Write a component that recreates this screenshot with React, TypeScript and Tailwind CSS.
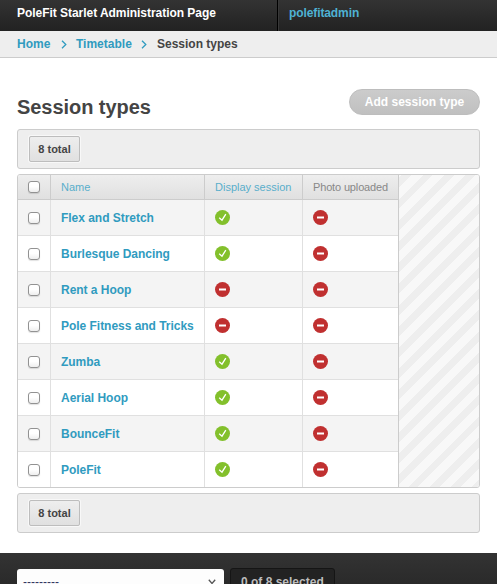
const font = "font-['Liberation_Sans',Arial,sans-serif]";

const rows: [string, boolean][] = [
  ['Flex and Stretch', true],
  ['Burlesque Dancing', true],
  ['Rent a Hoop', false],
  ['Pole Fitness and Tricks', false],
  ['Zumba', true],
  ['Aerial Hoop', true],
  ['BounceFit', true],
  ['PoleFit', true],
];

const widths = ['w-[33px]', 'w-[154px]', 'w-[98px]', 'w-[95px]'];

function Checkbox() {
  return (
    <span className="block size-3 rounded-[3px] border border-[#929292] bg-linear-to-b from-white from-45% to-[#eeeeee] shadow-[0_1px_1px_rgba(0,0,0,0.12)]" />
  );
}

function Status({ on }: { on: boolean }) {
  return (
    <svg width="15" height="15" viewBox="0 0 15 15" fill="none">
      <circle cx="7.5" cy="7.5" r="7.5" fill={on ? '#83c02c' : '#c03030'} />
      {on ? (
        <path d="M4.2 7.8 L7 10.2 L10.8 4.2" stroke="#fff" strokeWidth="1.3" />
      ) : (
        <path d="M4 7.5 H11" stroke="#fff" strokeWidth="2" />
      )}
    </svg>
  );
}

function Chevron() {
  return (
    <svg width="6" height="9" viewBox="0 0 6 9" fill="none" className="shrink-0">
      <path d="M1 0.8 L4.8 4.5 L1 8.2" stroke="#309bbf" strokeWidth="1.3" />
    </svg>
  );
}

function Total() {
  return (
    <section className="flex h-10 shrink-0 items-center rounded-[3px] border border-[#cccccc] bg-[#eeeeee] pl-[11px]">
      <span className="flex h-[26px] w-[51px] items-center justify-center rounded-[2px] border border-[#bdbdbd] bg-linear-to-b from-[#eeeeee] to-[#e0e0e0] text-[11px] font-bold text-[#444444] shadow-[0_0_0_1px_#f8f8f8]">
        8 total
      </span>
    </section>
  );
}

export default function App() {
  return (
    <div className={`flex h-[584px] w-[497px] flex-col overflow-hidden bg-white text-xs ${font}`}>
      <header className="flex h-[31px] shrink-0 bg-linear-to-b from-[#333333] to-[#222222] font-bold leading-[26px]">
        <div className="w-[278px] whitespace-nowrap border-r border-black pl-[17px] tracking-[-0.04px] text-white">
          PoleFit Starlet Administration Page
        </div>
        <div className="grow border-l border-[#383838] pl-2.5 tracking-[-0.1px] text-[#4fb2d3]">polefitadmin</div>
      </header>
      <nav className="flex h-[27px] shrink-0 items-center border-b border-[#cccccc] bg-[#eeeeee] pl-[17px] font-bold text-[#309bbf]">
        <span className="w-11">Home</span>
        <Chevron />
        <span className="ml-[9px] w-[65px]">Timetable</span>
        <Chevron />
        <span className="ml-[10px] text-[#444444]">Session types</span>
      </nav>
      <main className="flex h-[495px] shrink-0 flex-col px-[17px]">
        <div className="flex h-[71px] shrink-0 items-start justify-between">
          <h1 className="mt-[37px] text-xl font-bold leading-6 tracking-[-0.05px] text-[#444444]">Session types</h1>
          <button className="mt-[31px] h-[26px] w-[131px] rounded-full border border-[#bdbdbd] bg-linear-to-b from-[#cccccc] to-[#c0c0c0] text-xs font-bold leading-6 text-white">
            Add session type
          </button>
        </div>
        <Total />
        <div className="my-[5px] flex h-[314px] shrink-0 overflow-hidden rounded-[3px] border border-[#cccccc]">
          <div className="w-[381px] shrink-0 border-r border-[#cccccc]">
            <div className="flex h-[25px] border-b border-[#cccccc] bg-linear-to-b from-[#eeeeee] to-[#e0e0e0] text-[11px] text-[#888888]">
              <div className="flex w-[33px] items-center border-r border-[#cccccc] pl-2.5">
                <Checkbox />
              </div>
              <div className="flex w-[154px] items-center border-r border-[#cccccc] pl-2.5 text-[#59aecb]">Name</div>
              <div className="flex w-[98px] items-center whitespace-nowrap border-r border-[#cccccc] pl-2.5 text-[#59aecb]">
                Display session
              </div>
              <div className="flex w-[95px] items-center whitespace-nowrap pl-2.5 tracking-[-0.15px]">
                Photo uploaded
              </div>
            </div>
            {rows.map(([name, on], i) => (
              <div
                key={name}
                className={`flex h-9 border-[#e0e0e0] ${i < 7 ? 'border-b' : ''} ${i % 2 ? 'bg-white' : 'bg-[#f4f4f4]'}`}
              >
                <div className={`${widths[0]} border-r border-[#e0e0e0] pl-2.5 pt-3`}>
                  <Checkbox />
                </div>
                <div
                  className={`${widths[1]} whitespace-nowrap border-r border-[#e0e0e0] pl-2.5 pt-px font-bold leading-[35px] tracking-[-0.03px] text-[#309bbf]`}
                >
                  {name}
                </div>
                <div className={`${widths[2]} border-r border-[#e0e0e0] pl-2.5 pt-2.5`}>
                  <Status on={on} />
                </div>
                <div className={`${widths[3]} pl-2.5 pt-2.5`}>
                  <Status on={false} />
                </div>
              </div>
            ))}
          </div>
          <div className="grow bg-[repeating-linear-gradient(135deg,#f8f8f8_0px,#f8f8f8_2px,#eeeeee_2px,#eeeeee_9px,#f8f8f8_9px,#f8f8f8_15px)]" />
        </div>
        <Total />
      </main>
      <footer className="flex h-[60px] shrink-0 items-start bg-linear-to-b from-[#333333] to-[#222222] pl-[17px]">
        <div className="mt-4 flex h-[26px] w-[207px] items-center justify-between rounded-[3px] bg-[#fdfdfd] pl-1.5 pr-2 text-xs text-[#33335f]">
          <span>---------</span>
          <svg width="8" height="6" viewBox="0 0 8 6" fill="none">
            <path d="M0.8 0.8 L4 4.5 L7.2 0.8" stroke="#555555" strokeWidth="1.3" />
          </svg>
        </div>
        <div className="ml-1.5 mt-[15px] h-7 w-[105px] rounded-[3px] border border-[#151515] bg-[#222222] pl-2.5 text-xs font-bold leading-[26px] text-[#bdbdbd]">
          0 of 8 selected
        </div>
      </footer>
    </div>
  );
}
